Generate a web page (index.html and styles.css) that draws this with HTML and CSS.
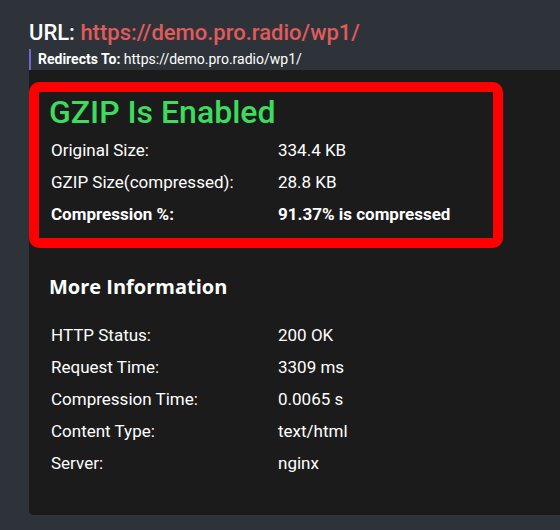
FILE: index.html
```html
<!DOCTYPE html>
<html lang="en">
<head>
<meta charset="utf-8">
<title>GZIP Test Result</title>
<link rel="stylesheet" href="styles.css">
</head>
<body>
<main class="page">
  <h2 class="url-title">URL: <span class="url-link">https://demo.pro.radio/wp1/</span></h2>
  <blockquote class="redirect"><strong>Redirects To:</strong> https://demo.pro.radio/wp1/</blockquote>
  <section class="card">
    <div class="result-box">
      <h3 class="result-title">GZIP Is Enabled</h3>
      <div class="info-grid">
        <div class="label">Original Size:</div><div class="value">334.4 KB</div>
        <div class="label">GZIP Size(compressed):</div><div class="value">28.8 KB</div>
        <div class="label strong">Compression %:</div><div class="value strong">91.37% is compressed</div>
      </div>
    </div>
    <div class="more">
      <h3 class="more-title">More Information</h3>
      <div class="info-grid">
        <div class="label">HTTP Status:</div><div class="value">200 OK</div>
        <div class="label">Request Time:</div><div class="value">3309 ms</div>
        <div class="label">Compression Time:</div><div class="value">0.0065 s</div>
        <div class="label">Content Type:</div><div class="value">text/html</div>
        <div class="label">Server:</div><div class="value">nginx</div>
      </div>
    </div>
  </section>
</main>
</body>
</html>
```
FILE: styles.css
```css
html, body {
  margin: 0;
  padding: 0;
  background: #2e3339;
  overflow: hidden;
}
body {
  font-family: Roboto, "Liberation Sans", sans-serif;
  color: #ffffff;
  width: 560px;
  height: 530px;
}
.page {
  padding: 20px 0 0 29px;
}
.url-title {
  margin: 0;
  font-size: 22px;
  line-height: 26px;
  font-weight: 500;
  color: #ffffff;
}
.url-link {
  color: #e05b5b;
}
.redirect {
  margin: 3px 0 0 0;
  padding: 0 0 0 7px;
  border-left: 2px solid #6f66d6;
  font-size: 14px;
  line-height: 21px;
  color: #ffffff;
}
.redirect strong {
  font-weight: 700;
}
.card {
  background: #1b1b1b;
  width: 531px;
  height: 445px;
  box-sizing: border-box;
  padding-top: 12px;
  border-bottom-left-radius: 4px;
}
.result-box {
  width: 474px;
  box-sizing: border-box;
  border: 10px solid #ff0000;
  border-radius: 10px;
  padding: 0 0 8px 10px;
}
.result-title {
  margin: 0 0 2px 0;
  font-size: 32px;
  line-height: 40px;
  font-weight: 500;
  color: #3ddc5e;
}
.info-grid {
  display: grid;
  grid-template-columns: 227px auto;
  grid-auto-rows: 32px;
  align-items: center;
  font-size: 17px;
  line-height: 32px;
  padding-left: 2px;
}
.strong {
  font-weight: 700;
}
.more {
  padding: 25px 0 0 20px;
}
.more-title {
  margin: 0 0 18px 0;
  font-family: "Open Sans", "Liberation Sans", sans-serif;
  font-size: 20px;
  line-height: 28px;
  font-weight: 700;
}
```
